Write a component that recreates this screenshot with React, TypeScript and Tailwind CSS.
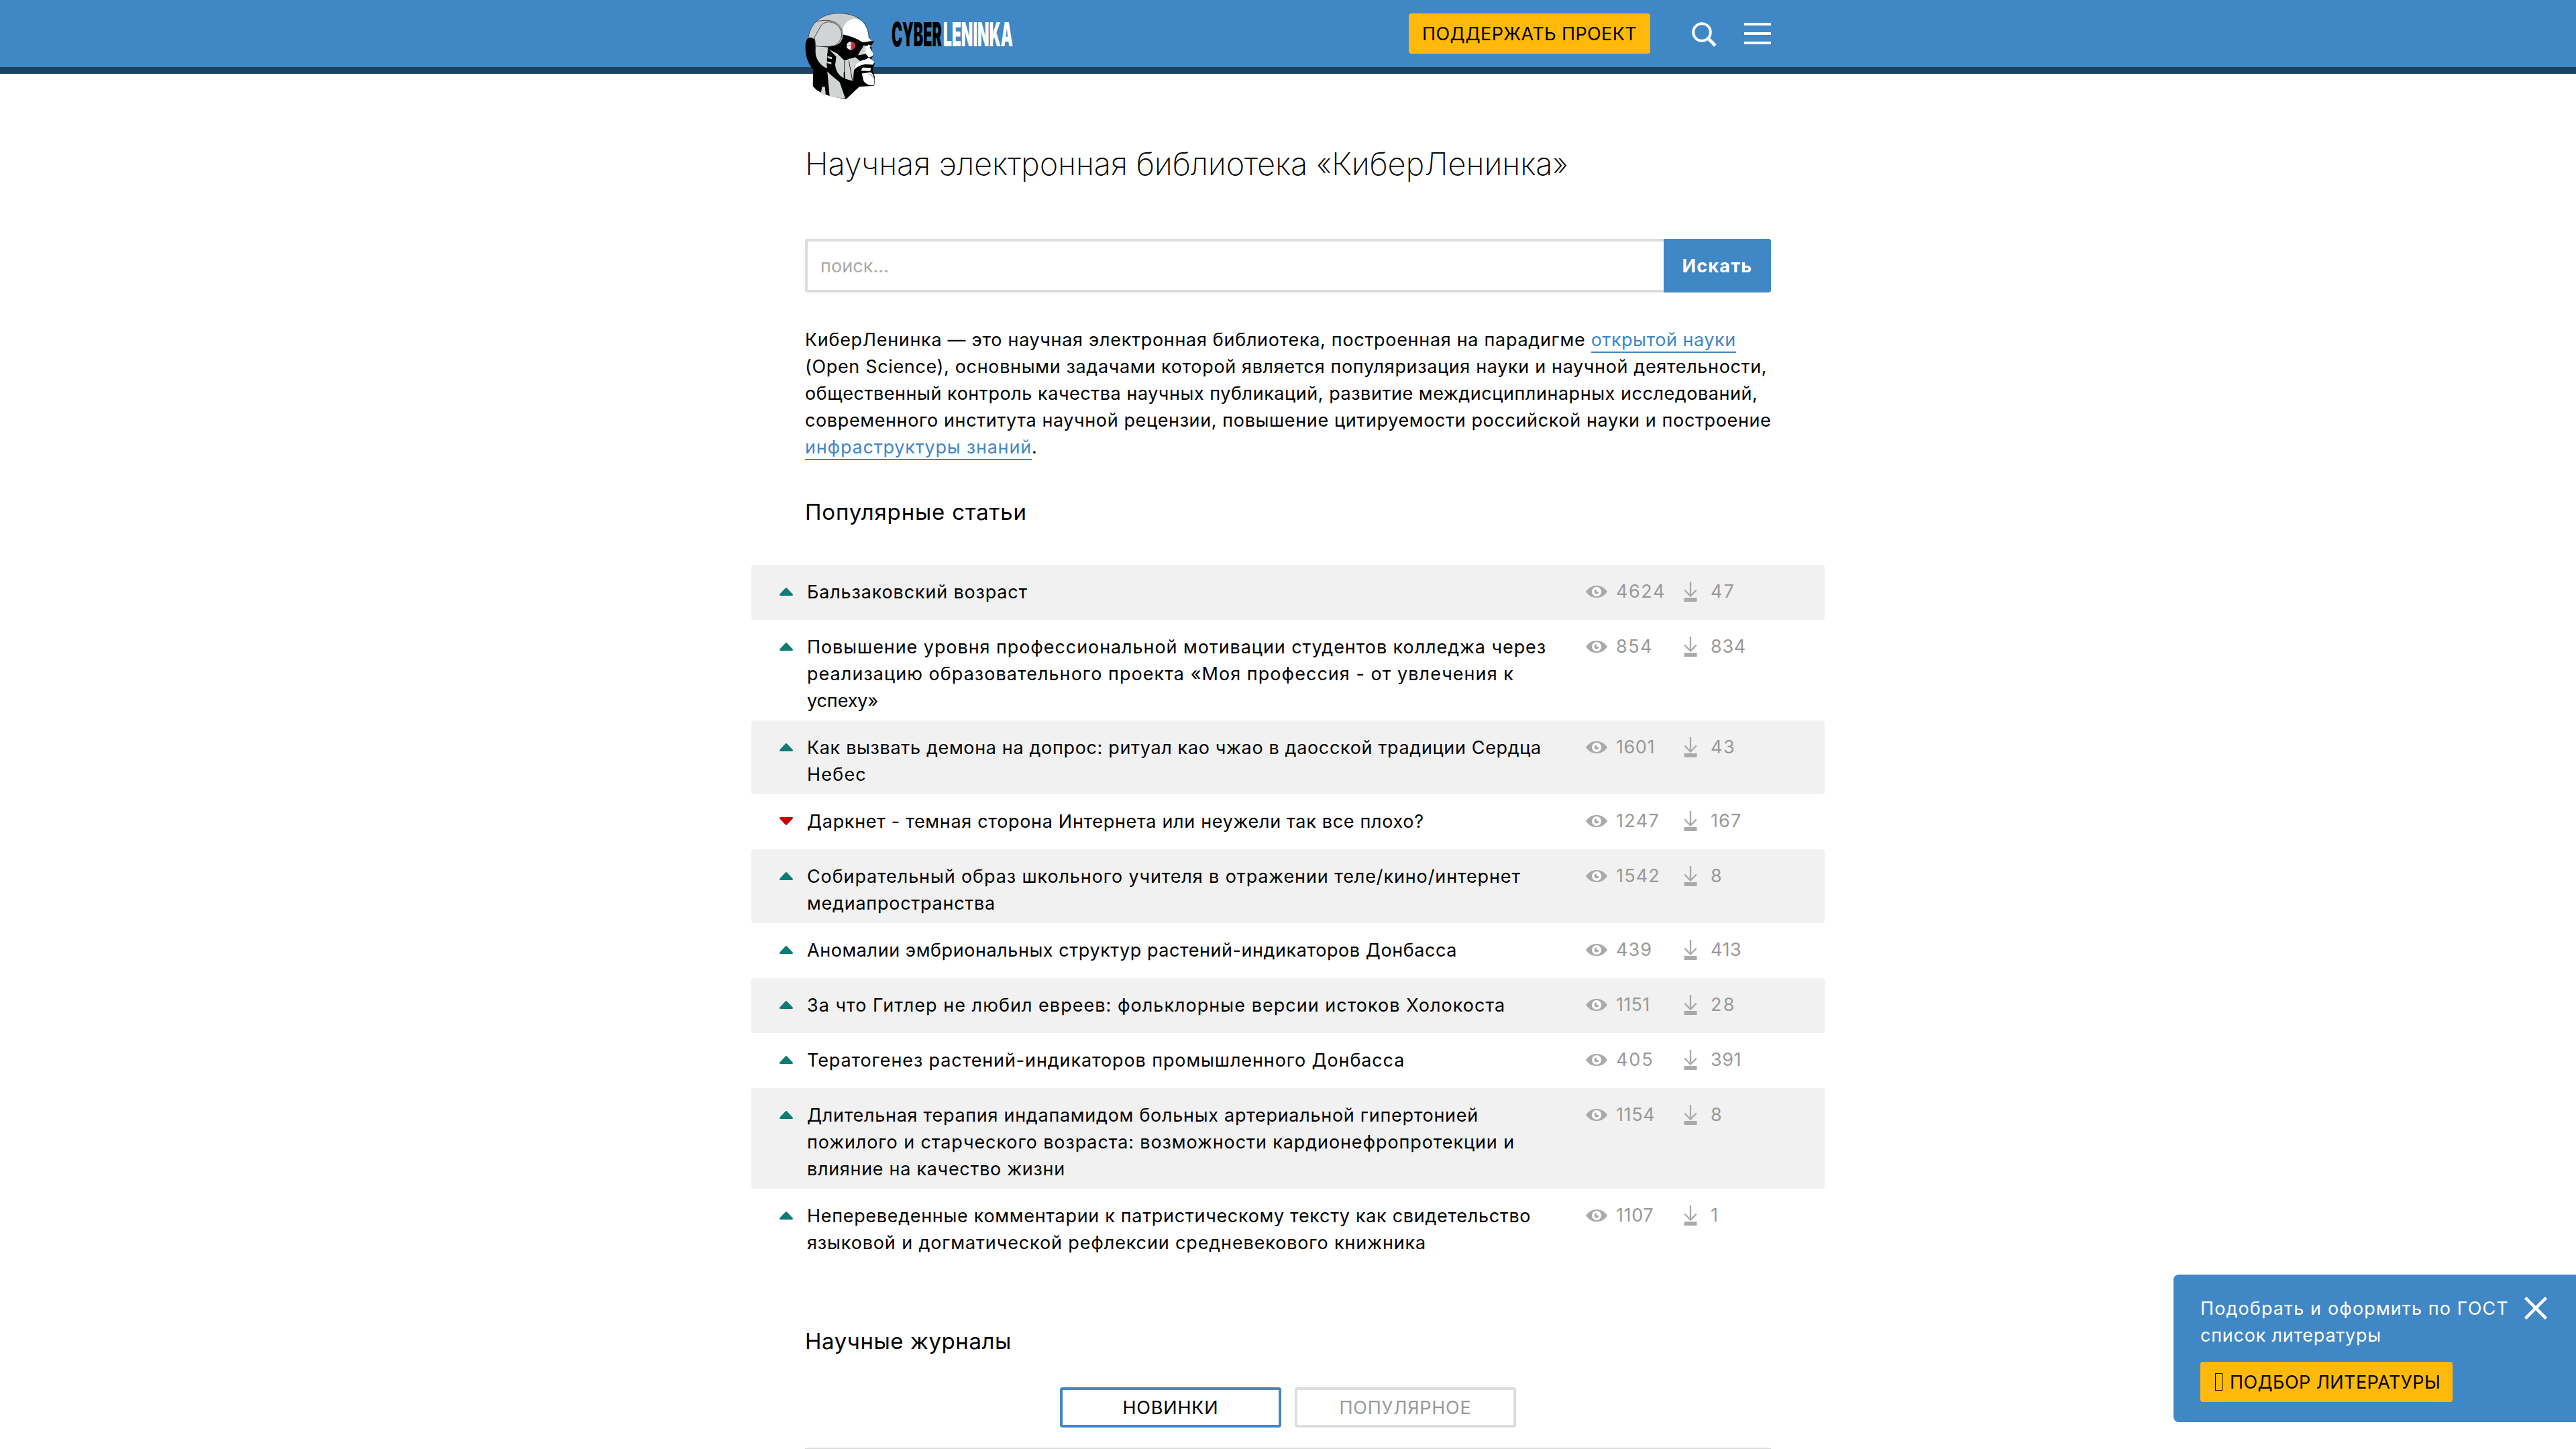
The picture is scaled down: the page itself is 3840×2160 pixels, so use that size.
function Head() {
  return (
    <svg viewBox="60 55 315 392" className="h-[131px] w-[105px]">
      <path d="M62 205C62 185 70 172 80 168L110 172L200 200L235 150L320 185L345 190L370 185L355 205L365 250L355 265L372 285L362 310L372 345L368 383L303 388L245 443C180 435 120 420 95 385L97 310C75 290 60 250 62 205Z" fill="#000" />
      <path d="M75 168C85 100 140 60 210 60C250 60 280 70 300 82C260 85 230 110 226 150L230 157C230 190 205 208 170 208L105 208L104 178Q90 165 75 170Z" fill="#c9cccd" stroke="#222" strokeWidth="2" />
      <path d="M102 168L132 115C148 92 190 93 212 122C235 155 222 185 195 203C180 210 115 210 108 206Z" fill="#d0d4d5" stroke="#000" strokeWidth="2" />
      <path d="M110 97C160 85 215 88 230 150" fill="none" stroke="#000" strokeWidth="2" />
      <path d="M228 155C222 115 250 82 295 82C332 98 345 140 345 170L357 182L335 192L314 190L290 175Z" fill="#fff" />
      <path d="M295 80C332 98 346 140 346 172" fill="none" stroke="#222" strokeWidth="2" />
      <path d="M230 155C255 160 295 172 318 190L345 186L370 185L350 200L318 205L308 230L285 262C270 272 250 275 235 270L190 228L172 212C215 205 230 190 230 155Z" fill="#000" />
      <circle cx="264" cy="205" r="18" fill="#fff" />
      <path d="M265 187H271A18 18 0 0 1 271 222H265Z" fill="#cf3340" />
      <path d="M246 205H265" stroke="#000" strokeWidth="1.500" />
      <path d="M107 212Q107 208 112 208L162 212L158 306C130 295 108 265 107 235Z" fill="#d0d4d5" />
      <path d="M168 222L204 240L236 271L285 256L308 275L280 300L275 362C235 355 200 340 195 290L200 255Z" fill="#d0d4d5" />
      <path d="M160 238L192 246L195 262L160 250ZM158 260L188 270L188 280L158 272ZM157 282L186 292L184 302L157 294Z" fill="#000" />
      <path d="M162 252L180 256L180 265L162 260ZM160 275L178 279L178 288L160 283Z" fill="#d0d4d5" />
      <path d="M236 272V352M256 272L272 360" fill="none" stroke="#000" strokeWidth="2.500" />
      <path d="M236 324V354" stroke="#000" strokeWidth="6" />
      <path d="M325 206L345 204L365 240L362 252L345 258L330 240L298 246L310 225Z" fill="#fff" />
      <path d="M322 203L332 205L330 242L298 248L312 225Z" fill="#d0d4d5" />
      <path d="M343 200L356 205L350 212L340 210Z" fill="#fff" />
      <path d="M275 316C283 285 310 268 332 266L345 258L370 277L364 290L330 288C300 292 287 306 275 316Z" fill="#fff" />
      <path d="M318 303L355 304L352 318L310 317Z" fill="#fff" />
      <path d="M314 329L354 324C372 337 372 360 368 382L345 380C325 372 320 362 318 345Z" fill="#fff" />
      <path d="M345 330C372 340 374 362 368 383L303 388" fill="none" stroke="#222" strokeWidth="2" />
      <path d="M160 320L176 336L215 368L240 440Q200 438 170 430Z" fill="#d0d4d5" />
      <path d="M136 389H149L153 428L131 420Z" fill="#d0d4d5" />
    </svg>
  );
}

function Eye() {
  return (
    <svg viewBox="0 0 32 18" className="h-[18px] w-8">
      <path d="M0 9C5 2 10 0 16 0S27 2 32 9C27 16 22 18 16 18S5 16 0 9Z" fill="#aaa" />
      <circle cx="16" cy="9" r="7" fill="#fff" />
      <path d="M16 5.600A3.400 3.400 0 1 0 19.400 9H16Z" fill="#aaa" />
    </svg>
  );
}

function Download() {
  return (
    <svg viewBox="0 0 20 30" className="h-[30px] w-5 fill-none stroke-[#aaa]">
      <path d="M10 0V22M1.200 12.500L10 21.500L18.800 12.500" strokeWidth="2.400" />
      <path d="M0.500 27H19.500" strokeWidth="6" />
    </svg>
  );
}

type Line = { text: string; track: string };
type Article = { lines: Line[]; views: string; viewsTrack: string; loads: string; loadsTrack: string; down?: boolean };

const ARTICLES: Article[] = [
  {
    lines: [{ text: 'Бальзаковский возраст', track: 'tracking-[0.83px]' }],
    views: '4624', viewsTrack: 'tracking-[1.58px]', loads: '47', loadsTrack: 'tracking-[2.13px]',
  },
  {
    lines: [
      { text: 'Повышение уровня профессиональной мотивации студентов колледжа через', track: 'tracking-[0.92px]' },
      { text: 'реализацию образовательного проекта «Моя профессия - от увлечения к', track: 'tracking-[1.04px]' },
      { text: 'успеху»', track: 'tracking-[-0.1px]' },
    ],
    views: '854', viewsTrack: 'tracking-[1.48px]', loads: '834', loadsTrack: 'tracking-[0.72px]',
  },
  {
    lines: [
      { text: 'Как вызвать демона на допрос: ритуал као чжао в даосской традиции Сердца', track: 'tracking-[0.65px]' },
      { text: 'Небес', track: 'tracking-[1.2px]' },
    ],
    views: '1601', viewsTrack: 'tracking-[0.56px]', loads: '43', loadsTrack: 'tracking-[1.44px]',
  },
  {
    lines: [{ text: 'Даркнет - темная сторона Интернета или неужели так все плохо?', track: 'tracking-[0.68px]' }],
    views: '1247', viewsTrack: 'tracking-[1.31px]', loads: '167', loadsTrack: 'tracking-[1.1px]', down: true,
  },
  {
    lines: [
      { text: 'Собирательный образ школьного учителя в отражении теле/кино/интернет', track: 'tracking-[0.88px]' },
      { text: 'медиапространства', track: 'tracking-[0.74px]' },
    ],
    views: '1542', viewsTrack: 'tracking-[1.17px]', loads: '8', loadsTrack: 'tracking-[1px]',
  },
  {
    lines: [{ text: 'Аномалии эмбриональных структур растений-индикаторов Донбасса', track: 'tracking-[0.56px]' }],
    views: '439', viewsTrack: 'tracking-[1.04px]', loads: '413', loadsTrack: 'tracking-[0.6px]',
  },
  {
    lines: [{ text: 'За что Гитлер не любил евреев: фольклорные версии истоков Холокоста', track: 'tracking-[1.02px]' }],
    views: '1151', viewsTrack: 'tracking-[0.3px]', loads: '28', loadsTrack: 'tracking-[2.4px]',
  },
  {
    lines: [{ text: 'Тератогенез растений-индикаторов промышленного Донбасса', track: 'tracking-[0.88px]' }],
    views: '405', viewsTrack: 'tracking-[1.9px]', loads: '391', loadsTrack: 'tracking-[0.6px]',
  },
  {
    lines: [
      { text: 'Длительная терапия индапамидом больных артериальной гипертонией', track: 'tracking-[0.71px]' },
      { text: 'пожилого и старческого возраста: возможности кардионефропротекции и', track: 'tracking-[0.89px]' },
      { text: 'влияние на качество жизни', track: 'tracking-[0.7px]' },
    ],
    views: '1154', viewsTrack: 'tracking-[0.6px]', loads: '8', loadsTrack: 'tracking-[1px]',
  },
  {
    lines: [
      { text: 'Непереведенные комментарии к патристическому тексту как свидетельство', track: 'tracking-[0.68px]' },
      { text: 'языковой и догматической рефлексии средневекового книжника', track: 'tracking-[0.86px]' },
    ],
    views: '1107', viewsTrack: 'tracking-[0.6px]', loads: '1', loadsTrack: 'tracking-[1px]',
  },
];

function Row({ a }: { a: Article }) {
  return (
    <li className="flex min-h-[82px] rounded-[4px] pt-[21px] pb-[9px] pl-[42px] odd:bg-[#f1f1f1]">
      <svg viewBox="0 0 20 12" className={a.down ? 'mt-[13px] h-3 w-5 rotate-180 fill-[#c80000]' : 'mt-[13px] h-3 w-5 fill-[#0e7c74]'}>
        <path d="M8.700 0.700Q10-0.500 11.300 0.700L19.500 9.500Q21 12 18 12H2Q-1 12 0.500 9.500Z" />
      </svg>
      <div className="ml-[21px] flex-1 whitespace-nowrap">
        {a.lines.map((l) => (
          <div key={l.text} className={l.track}>{l.text}</div>
        ))}
      </div>
      <div className="flex h-[38px] w-[356px] items-center text-[#999]">
        <Eye />
        <span className={`ml-[13px] w-[101px] ${a.viewsTrack}`}>{a.views}</span>
        <Download />
        <span className={`ml-5 ${a.loadsTrack}`}>{a.loads}</span>
      </div>
    </li>
  );
}

export default function App() {
  return (
    <div className="relative h-[2160px] w-[3840px] overflow-hidden bg-white font-['Inter',sans-serif] text-[27px] leading-10 text-black">
      <header className="h-[110px] border-b-[10px] border-[#1c4260] bg-[#4087c5]">
        <div className="mx-auto flex w-[1440px] items-start">
          <div className="relative z-10 mt-[18px] h-[82px] shrink-0"><Head /></div>
          <div className="mt-[27px] ml-6 flex h-[50px] shrink-0 text-[49px] leading-[50px] font-black">
            <div className="w-[77px]"><span className="inline-block origin-left scale-x-[0.44]">CYBER</span></div>
            <div className="w-[107px]"><span className="inline-block origin-left scale-x-[0.465] text-white">LENINKA</span></div>
          </div>
          <button className="mt-5 ml-auto h-[60px] w-[360px] rounded-[4px] bg-[#ffb90a] pt-[2px] tracking-[0.37px]">ПОДДЕРЖАТЬ ПРОЕКТ</button>
          <svg viewBox="0 0 38 38" className="mt-8 ml-[61px] h-[38px] w-[38px] fill-none stroke-white">
            <circle cx="16" cy="16" r="12.800" strokeWidth="4" />
            <path d="M25 25L36 36" strokeWidth="5" />
          </svg>
          <div className="mt-[34px] ml-[41px] flex w-10 flex-col gap-[10px]">
            <div className="h-1 bg-white" />
            <div className="h-1 bg-white" />
            <div className="h-1 bg-white" />
          </div>
        </div>
      </header>

      <main className="mx-auto w-[1440px] pt-[104px]">
        <h1 className="h-[59px] text-[47px] leading-[60px] font-[250] tracking-[-0.18px] whitespace-nowrap">Научная электронная библиотека «КиберЛенинка»</h1>
        <div className="mt-[83px] flex h-20">
          <div className="flex-1 rounded-l-[4px] border-4 border-r-0 border-[#ddd] pt-[17px] pl-[19px] tracking-[0.07px] text-[#aaa]">поиск...</div>
          <button className="w-40 rounded-r-[4px] bg-[#4087c5] pt-[2px] font-bold tracking-[1.2px] text-white">Искать</button>
        </div>
        <div className="mt-[51px] whitespace-nowrap">
          <div className="tracking-[0.69px]">
            КиберЛенинка — это научная электронная библиотека, построенная на парадигме{' '}
            <a className="border-b-2 border-[#4087c5] pb-px tracking-[0.53px] text-[#4087c5]">открытой науки</a>
          </div>
          <div className="tracking-[0.65px]">(Open Science), основными задачами которой является популяризация науки и научной деятельности,</div>
          <div className="tracking-[0.54px]">общественный контроль качества научных публикаций, развитие междисциплинарных исследований,</div>
          <div className="tracking-[0.62px]">современного института научной рецензии, повышение цитируемости российской науки и построение</div>
          <div className="tracking-[0.79px]">
            <a className="border-b-2 border-[#4087c5] pb-px text-[#4087c5]">инфраструктуры знаний</a>.
          </div>
        </div>
        <h2 className="mt-[56px] text-[33px] tracking-[0.84px]">Популярные статьи</h2>
        <ul className="-mx-20 mt-[59px]">
          {ARTICLES.map((a) => (
            <Row key={a.lines[0].text} a={a} />
          ))}
        </ul>
        <h2 className="mt-[97px] text-[33px] tracking-[0.59px]">Научные журналы</h2>
        <div className="mt-[49px] flex justify-center gap-5">
          <button className="h-[60px] w-[330px] rounded-[4px] border-4 border-[#4087c5] pt-[2px] tracking-[0.82px]">НОВИНКИ</button>
          <button className="h-[60px] w-[330px] rounded-[4px] border-4 border-[#ddd] pt-[2px] tracking-[0.75px] text-[#999]">ПОПУЛЯРНОЕ</button>
        </div>
        <div className="mt-[30px] h-[2px] bg-[#ddd]" />
      </main>

      <aside className="absolute right-0 bottom-10 h-[220px] w-[600px] rounded-l-[8px] bg-[#4087c5] pt-[31px] pl-10 text-white">
        <div className="tracking-[1.11px]">Подобрать и оформить по ГОСТ</div>
        <div className="tracking-[0.76px]">список литературы</div>
        <button className="mt-[19px] flex h-[60px] w-[376px] items-center rounded-[4px] bg-[#ffb90a] pl-[22px] tracking-[0.42px] whitespace-nowrap text-black">
          <span className="mr-[11px] h-[26px] w-[11px] border border-black" />
          <span className="pt-[2px]">ПОДБОР ЛИТЕРАТУРЫ</span>
        </button>
        <svg viewBox="0 0 34 34" className="absolute top-[33px] right-[43px] h-[34px] w-[34px] fill-none stroke-white">
          <path d="M1.500 1.500L32.500 32.500M32.500 1.500L1.500 32.500" strokeWidth="4.500" />
        </svg>
      </aside>
    </div>
  );
}
